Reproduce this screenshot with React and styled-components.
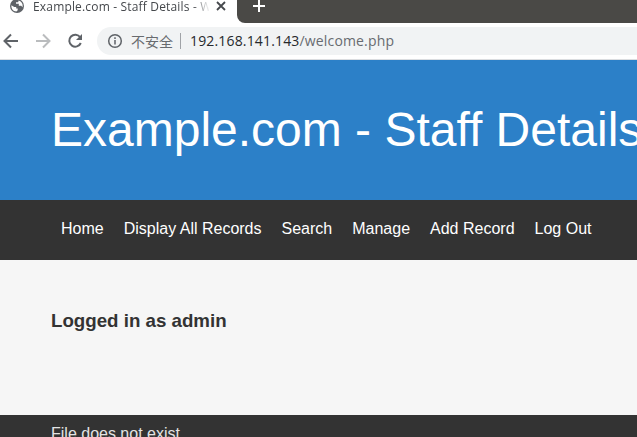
import React from "react";
import styled, { createGlobalStyle } from "styled-components";

const GlobalStyle = createGlobalStyle`
  *, *::before, *::after { box-sizing: border-box; }
  html, body { margin: 0; padding: 0; overflow: hidden; }
  body { background: #f6f6f6; font-family: "Liberation Sans", Arial, sans-serif; }
`;

const Window = styled.div`
  display: flex;
  flex-direction: column;
  width: 637px;
  height: 437px;
  overflow: hidden;
`;

const TabStrip = styled.div`
  display: flex;
  flex: none;
  height: 23px;
  background: #fff;
`;

const Tab = styled.div`
  display: flex;
  flex: none;
  width: 237px;
  height: 13px;
  padding-left: 9px;
`;

const TabIcon = styled.svg`
  flex: none;
  width: 16px;
  height: 16px;
  margin: -2px 8px 0 0;
`;

const TabTitle = styled.div`
  flex: none;
  width: 176px;
  height: 18px;
  margin-top: -2px;
  overflow: hidden;
  white-space: nowrap;
  font: 12px/18px "Open Sans", sans-serif;
  letter-spacing: ${(p) => p.$tracking}px;
  color: #45484c;
  mask-image: linear-gradient(to right, #000 160px, transparent 177px);
`;

const CloseIcon = styled.svg`
  flex: none;
  width: 10px;
  height: 10px;
  margin: 1px 0 0 7px;
`;

const Frame = styled.div`
  flex: 1;
  padding-left: 16px;
  background: #4a4946;
  border-bottom-left-radius: 8px;
`;

const PlusIcon = styled.svg`
  display: block;
  width: 12px;
  height: 12px;
`;

const Toolbar = styled.div`
  display: flex;
  flex: none;
  align-items: center;
  height: 37px;
  background: #fff;
  border-bottom: 1px solid #dbdde0;
`;

const ToolIcon = styled.svg`
  flex: none;
  width: 16px;
  height: 16px;
  margin-left: ${(p) => p.$left}px;
`;

const AddressBar = styled.div`
  display: flex;
  flex: 1;
  align-items: center;
  height: 28px;
  margin-left: 14px;
  padding-left: 10px;
  background: #f1f3f4;
  border-radius: 14px 0 0 14px;
`;

const InfoIcon = styled.svg`
  flex: none;
  width: 16px;
  height: 16px;
`;

const Security = styled.span`
  margin-left: 8px;
  font: 14px/20px "Noto Sans CJK SC", sans-serif;
  color: #686b6f;
`;

const Divider = styled.span`
  width: 1px;
  height: 16px;
  margin: 0 9px 0 7px;
  background: #a0a3a7;
`;

const Address = styled.span`
  font: 14px/20px "Open Sans", sans-serif;
  letter-spacing: ${(p) => p.$tracking}px;
  white-space: nowrap;
  color: #27292c;
`;

const Path = styled.span`
  color: #686b70;
`;

const Banner = styled.header`
  flex: none;
  height: 140px;
  padding: 42px 0 0 51px;
  background: #2c80c8;
`;

const SiteTitle = styled.h1`
  margin: 0;
  font-size: 48px;
  font-weight: 400;
  line-height: 55px;
  white-space: nowrap;
  color: #fff;
`;

const Navigation = styled.nav`
  display: flex;
  flex: none;
  align-items: center;
  gap: 20px;
  height: 60px;
  padding: 0 0 2px 61px;
  background: #333;
`;

const NavLink = styled.a`
  font-size: 16px;
  line-height: 18px;
  white-space: nowrap;
  color: #fff;
`;

const Content = styled.main`
  flex: none;
  height: 155px;
  padding: 50px 0 0 51px;
  background: #f6f6f6;
`;

const Status = styled.h3`
  margin: 0;
  font-size: 18.72px;
  line-height: 21px;
  color: #333;
`;

const Footer = styled.footer`
  flex: 1;
  padding: 10px 0 0 51px;
  background: #333;
  font-size: 16px;
  line-height: 18px;
  white-space: nowrap;
  color: #e4e4e4;
`;

const links = ["Home", "Display All Records", "Search", "Manage", "Add Record", "Log Out"];

export default function App() {
  return (
    <>
      <GlobalStyle />
      <Window>
        <TabStrip>
          <Tab>
            <TabIcon viewBox="0 0 16 16">
              <circle cx="8" cy="8" r="7" fill="#5f6368" />
              <path d="M2.4 7.2 5.2 9h2v1.6h1.5v1.6l-1.3 1.3C4.2 13.3 2.1 10.8 2.4 7.2zM9.6 2.6 9.2 4.2H7v1.6h2.8v2h2.4l1.3 1.5c.8-2.8-.8-5.8-3.9-6.7z" fill="#fff" />
            </TabIcon>
            <TabTitle $tracking={0.17}>Example.com - Staff Details - Welcome</TabTitle>
            <CloseIcon viewBox="0 0 10 10" fill="none" stroke="#45484c" strokeWidth="1.8">
              <path d="m1 1 8 8M9 1 1 9" />
            </CloseIcon>
          </Tab>
          <Frame>
            <PlusIcon viewBox="0 0 12 12" fill="none" stroke="#fff" strokeWidth="2">
              <path d="M0 6h12M6 0v12" />
            </PlusIcon>
          </Frame>
        </TabStrip>
        <Toolbar>
          <ToolIcon $left={3} viewBox="0 0 16 16" fill="none" stroke="#5f6368" strokeWidth="2">
            <path d="M15 8H2M8 1.5 1.5 8 8 14.5" />
          </ToolIcon>
          <ToolIcon $left={16} viewBox="0 0 16 16" fill="none" stroke="#babcbe" strokeWidth="2">
            <path d="M1 8h13M8 1.5 14.5 8 8 14.5" />
          </ToolIcon>
          <ToolIcon $left={16} viewBox="0 0 16 16" fill="none" stroke="#5f6368" strokeWidth="2">
            <path d="M13.2 4.2A6 6 0 1 0 13.8 10" />
            <path d="M15 1v6H9z" fill="#5f6368" stroke="none" />
          </ToolIcon>
          <AddressBar>
            <InfoIcon viewBox="0 0 16 16" fill="none" stroke="#5f6368" strokeWidth="1.5">
              <circle cx="8" cy="8" r="6.3" />
              <path d="M8 7v4.5M8 4.3v1.6" />
            </InfoIcon>
            <Security>不安全</Security>
            <Divider />
            <Address $tracking={0.16}>
              192.168.141.143<Path>/welcome.php</Path>
            </Address>
          </AddressBar>
        </Toolbar>
        <Banner>
          <SiteTitle>Example.com - Staff Details</SiteTitle>
        </Banner>
        <Navigation>
          {links.map((label) => (
            <NavLink key={label}>{label}</NavLink>
          ))}
        </Navigation>
        <Content>
          <Status>Logged in as admin</Status>
        </Content>
        <Footer>File does not exist</Footer>
      </Window>
    </>
  );
}
